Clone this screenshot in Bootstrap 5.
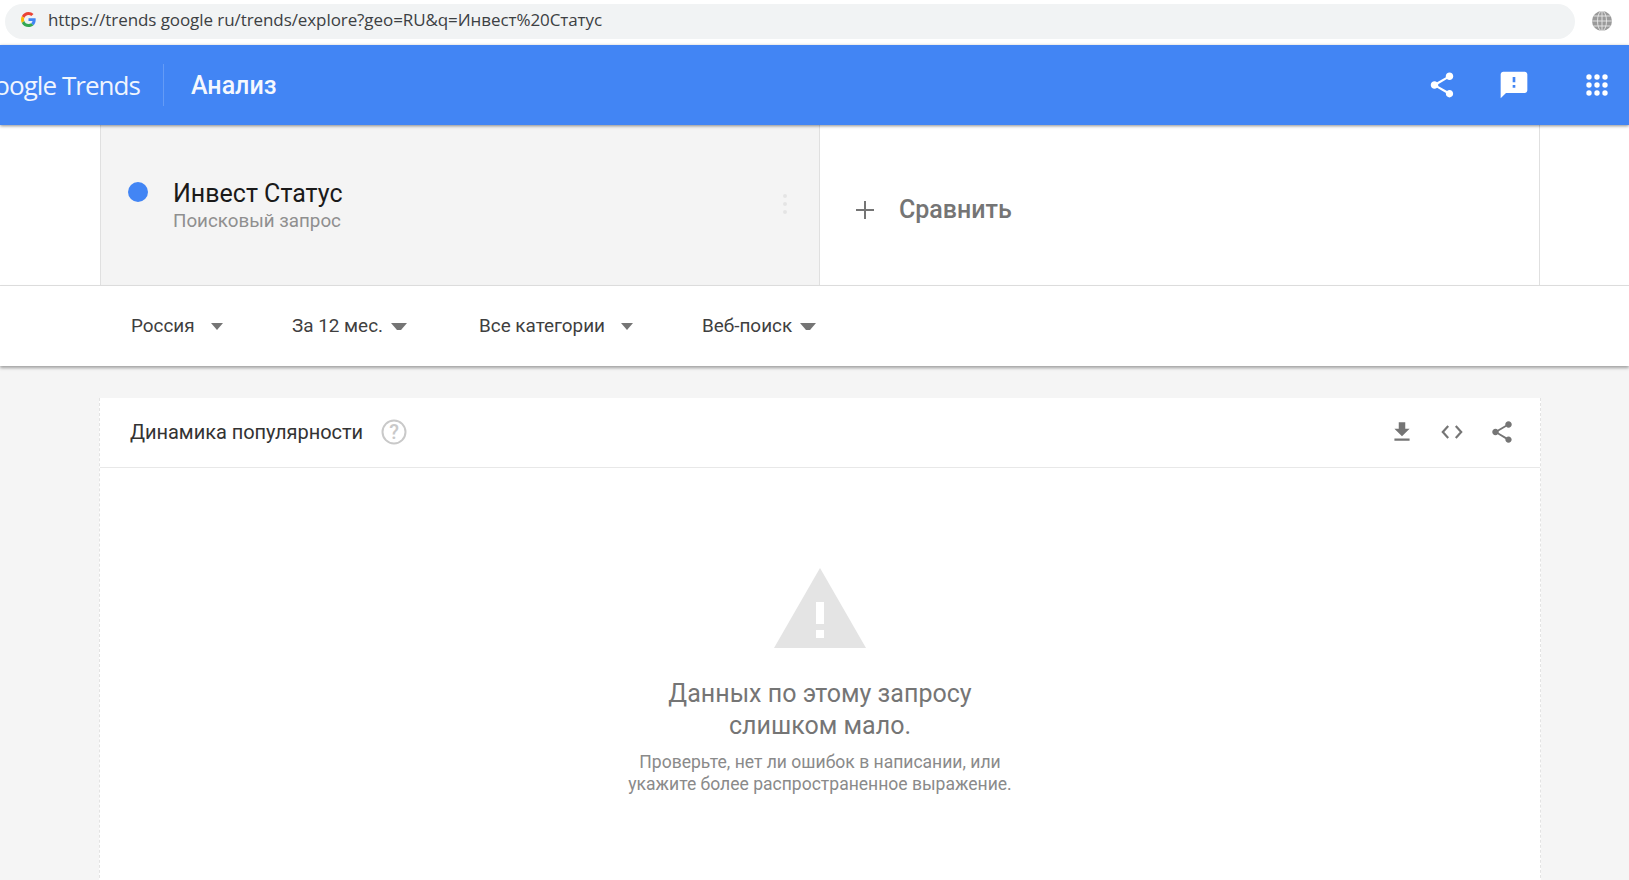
<!DOCTYPE html>
<html lang="ru">
<head>
<meta charset="utf-8">
<title>Google Trends</title>
<link href="https://cdn.jsdelivr.net/npm/bootstrap@5.3.0/dist/css/bootstrap.min.css" rel="stylesheet">
<style>
html,body{height:880px;overflow:hidden}
body{font-family:Roboto,"Liberation Sans",sans-serif;background:#f5f5f5;color:#212121}
.chrome-bar{height:45px;background:#fff;padding:3px 17px 6px 5px;gap:17px}
.url-pill{height:35px;background:#f1f3f4;border-radius:18px;padding:0 0 3px 16px;gap:12px;font:17px/1 "Open Sans","Liberation Sans",sans-serif;color:#3c4043;letter-spacing:-.08px}
.trend-head{height:80px;background:#4285f4;color:#fff;box-shadow:0 1px 3px rgba(0,0,0,.45);position:relative;z-index:3;padding-right:20px}
.logo-box{width:164px;height:42px;overflow:hidden;border-right:1px solid rgba(255,255,255,.18);padding-right:23px;white-space:nowrap}
.logo-txt{font:26px/1 "Open Sans","Liberation Sans",sans-serif;letter-spacing:-.95px;color:#fff;opacity:.92}
.head-title{font-size:25px;font-weight:500;margin-left:27px;line-height:1;opacity:.95}
.gap-chat{margin-left:41px}
.gap-apps{margin-left:55px}
.term-strip{height:161px;background:#fff;border-bottom:1px solid #e0e0e0;padding:0 89px 0 100px}
.term-cell{border-left:1px solid #e0e0e0}
.term-on{flex:0 0 719px;background:#f4f4f4;padding:54px 0 0 27px}
.term-off{flex:1 1 0;background:#fff;border-right:1px solid #e0e0e0;padding:10px 0 0 35px}
.term-dot{width:20px;height:20px;border-radius:50%;background:#4285f4;margin-top:3px}
.term-body{margin-left:25px}
.term-name{font-size:25px;line-height:30px;color:#1a1a1a}
.term-sub{font-size:18.8px;line-height:25px;color:#8f8f8f}
.compare{font-size:25px;font-weight:500;color:#757575;margin-left:24px}
.menu-dots{padding:12px 31px 0 0;margin-left:auto}
.filter-strip{height:80px;background:#fff;box-shadow:0 2px 3px rgba(0,0,0,.35);padding:1px 0 0 131px;position:relative;z-index:2;font-size:18.9px;color:#3f3f3f}
.filter-pick{display:flex;align-items:center}
.caret-down{width:0;height:0;border-left:6px solid transparent;border-right:6px solid transparent;border-top:7px solid #757575}
.w1{width:161px}.w2{width:187px}.w3{width:223px}
.trend-card{margin:32px 88px 0 99px;height:500px;background:#fff;border-left:1px dashed #e3e3e3;border-right:1px dashed #e3e3e3}
.trend-card-head{height:70px;border-bottom:1px solid #e8e8e8;padding:0 25px 2px 30px}
.card-title{font-size:20px;color:#333;letter-spacing:-.04px}
.card-ico{gap:24px}
.help-ico{margin-left:18px}
.empty-box{padding-top:100px;text-align:center}
.empty-main{font-size:25px;line-height:32px;color:#757575;margin-top:30px;letter-spacing:.02px}
.empty-note{font-size:17.55px;line-height:22px;color:#8a8a8a;margin-top:9px}
</style>
</head>
<body>
<div class="chrome-bar d-flex align-items-center">
  <div class="url-pill flex-grow-1 d-flex align-items-center">
    <svg width="15" height="15" viewBox="0 0 48 48"><path fill="#EA4335" d="M24 9.500c3.500 0 6.700 1.200 9.200 3.600l6.900-6.900C35.900 2.400 30.500 0 24 0 14.600 0 6.500 5.400 2.600 13.200l8 6.200C12.500 13.700 17.800 9.500 24 9.500z"/><path fill="#4285F4" d="M47 24.500c0-1.600-.1-3.100-.4-4.500H24v9h12.900c-.6 3-2.200 5.500-4.700 7.200l7.700 6C44.400 38.100 47 31.900 47 24.500z"/><path fill="#FBBC05" d="M10.500 28.600c-.5-1.400-.8-3-.8-4.600s.3-3.200.8-4.600l-8-6.200C.9 16.500 0 20.100 0 24s.9 7.500 2.600 10.800l7.900-6.200z"/><path fill="#34A853" d="M24 48c6.500 0 11.900-2.100 15.900-5.800l-7.700-6c-2.100 1.400-4.900 2.300-8.200 2.300-6.200 0-11.500-4.200-13.400-9.900l-8 6.200C6.500 42.600 14.600 48 24 48z"/></svg>
    <span>https://trends google ru/trends/explore?geo=RU&amp;q=Инвест%20Статус</span>
  </div>
  <svg width="20" height="20" viewBox="0 0 20 20" fill="none" stroke="#e8e8e8" stroke-width=".9"><circle cx="10" cy="10" r="10" fill="#9a9a9a" stroke="none"/><ellipse cx="10" cy="10" rx="4.500" ry="10"/><path d="M10 0v20M0 10h20M1.500 5h17M1.500 15h17"/></svg>
</div>

<header class="trend-head d-flex align-items-center">
  <div class="logo-box d-flex align-items-center justify-content-end"><span class="logo-txt">Google Trends</span></div>
  <div class="head-title">Анализ</div>
  <div class="ms-auto d-flex align-items-center">
    <svg width="30" height="30" viewBox="0 0 24 24" fill="#fff"><path d="M18 16.080c-.76 0-1.440.3-1.960.77L8.910 12.700c.05-.23.090-.46.090-.7s-.040-.47-.090-.7l7.050-4.110c.54.5 1.250.81 2.040.81 1.660 0 3-1.340 3-3s-1.340-3-3-3-3 1.340-3 3c0 .24.040.47.090.7L8.040 9.810C7.500 9.310 6.790 9 6 9c-1.660 0-3 1.340-3 3s1.340 3 3 3c.79 0 1.500-.31 2.040-.81l7.120 4.160c-.05.21-.080.43-.080.65 0 1.610 1.310 2.920 2.920 2.920s2.920-1.310 2.920-2.920-1.310-2.920-2.920-2.920z"/></svg>
    <svg class="gap-chat" width="32" height="32" viewBox="0 0 24 24" fill="#fff"><path d="M20 2H4c-1.100 0-2 .9-2 2v18l4-4h14c1.100 0 2-.9 2-2V4c0-1.100-.9-2-2-2zm-7 12h-2v-2h2v2zm0-4h-2V6h2v4z"/></svg>
    <svg class="gap-apps" width="24" height="24" viewBox="0 0 24 24" fill="#fff"><circle cx="4" cy="4" r="2.700"/><circle cx="12" cy="4" r="2.700"/><circle cx="20" cy="4" r="2.700"/><circle cx="4" cy="12" r="2.700"/><circle cx="12" cy="12" r="2.700"/><circle cx="20" cy="12" r="2.700"/><circle cx="4" cy="20" r="2.700"/><circle cx="12" cy="20" r="2.700"/><circle cx="20" cy="20" r="2.700"/></svg>
  </div>
</header>

<section class="term-strip d-flex">
  <div class="term-cell term-on d-flex">
    <div class="term-dot"></div>
    <div class="term-body">
      <div class="term-name">Инвест Статус</div>
      <div class="term-sub">Поисковый запрос</div>
    </div>
    <div class="menu-dots"><svg width="6" height="22" viewBox="0 0 6 22" fill="#e4e4e4"><circle cx="3" cy="3" r="2"/><circle cx="3" cy="11" r="2"/><circle cx="3" cy="19" r="2"/></svg></div>
  </div>
  <div class="term-cell term-off d-flex align-items-center">
    <svg width="20" height="20" viewBox="0 0 20 20" fill="#757575"><path d="M9 1h2v18H9zM1 9h18v2H1z"/></svg>
    <span class="compare">Сравнить</span>
  </div>
</section>

<nav class="filter-strip d-flex align-items-center">
  <div class="filter-pick w1"><span>Россия</span><span class="caret-down ms-3"></span></div>
  <div class="filter-pick w2"><span>За 12 мес.</span><span class="caret-down ms-2 ps-1"></span></div>
  <div class="filter-pick w3"><span>Все категории</span><span class="caret-down ms-3"></span></div>
  <div class="filter-pick"><span>Веб-поиск</span><span class="caret-down ms-2 ps-1"></span></div>
</nav>

<main class="trend-card">
  <div class="trend-card-head d-flex align-items-center">
    <span class="card-title">Динамика популярности</span>
    <svg class="help-ico" width="26" height="26" viewBox="0 0 26 26" fill="none"><circle cx="13" cy="13" r="11.500" stroke="#c9c9c9" stroke-width="2"/><text x="13" y="20" font-family="Roboto,sans-serif" font-size="20" font-weight="500" text-anchor="middle" fill="#c9c9c9">?</text></svg>
    <div class="ms-auto d-flex align-items-center card-ico">
      <svg width="26" height="26" viewBox="0 0 24 24" fill="#757575"><path d="M19 9h-4V3H9v6H5l7 7 7-7zM5 18v2h14v-2H5z"/></svg>
      <svg width="26" height="26" viewBox="0 0 24 24" fill="none" stroke="#757575" stroke-width="2"><path d="M8.500 6.500 3.500 12l5 5.500M15.500 6.500l5 5.500-5 5.500"/></svg>
      <svg width="26" height="26" viewBox="0 0 24 24" fill="#757575"><path d="M18 16.080c-.76 0-1.440.3-1.960.77L8.910 12.700c.05-.23.090-.46.090-.7s-.040-.47-.090-.7l7.050-4.110c.54.5 1.250.81 2.040.81 1.660 0 3-1.340 3-3s-1.340-3-3-3-3 1.340-3 3c0 .24.040.47.090.7L8.040 9.810C7.500 9.310 6.790 9 6 9c-1.660 0-3 1.340-3 3s1.340 3 3 3c.79 0 1.500-.31 2.040-.81l7.120 4.160c-.05.21-.080.43-.080.65 0 1.610 1.310 2.920 2.920 2.920s2.920-1.310 2.920-2.920-1.310-2.920-2.920-2.920z"/></svg>
    </div>
  </div>
  <div class="empty-box">
    <svg width="92" height="80" viewBox="0 0 92 80" class="d-block mx-auto" fill="#e4e4e4"><path fill-rule="evenodd" d="M46 0 92 80H0zM42 34v22h8V34zM42 62v8h8v-8z"/></svg>
    <div class="empty-main">Данных по этому запросу<br>слишком мало.</div>
    <div class="empty-note">Проверьте, нет ли ошибок в написании, или<br>укажите более распространенное выражение.</div>
  </div>
</main>
</body>
</html>
